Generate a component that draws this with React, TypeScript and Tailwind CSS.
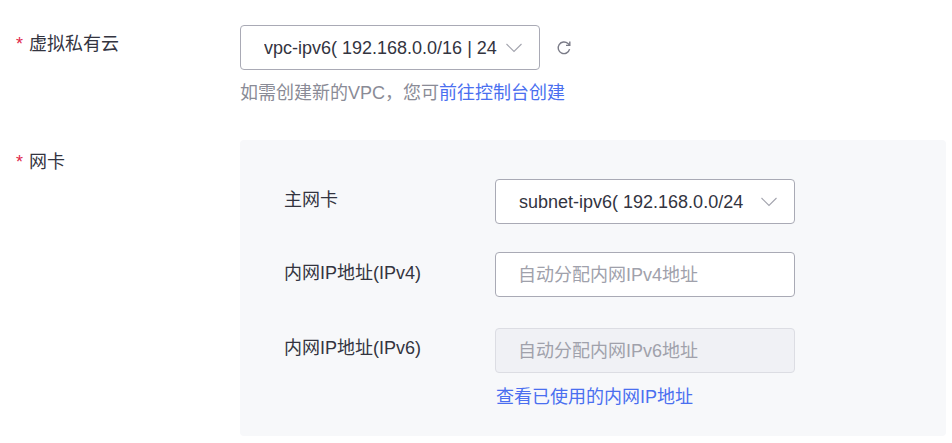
function Chevron() {
  return (
    <svg width="18" height="10" viewBox="0 0 18 10" fill="none" className="shrink-0 text-[#a3a4ae]">
      <path d="M1.5 1l7.5 7.5L16.5 1" stroke="currentColor" strokeWidth="1.1" />
    </svg>
  )
}

function Refresh() {
  return (
    <svg width="16" height="16" viewBox="0 0 16 16" fill="none" className="ml-[16px] text-[#7a7b87]">
      <path d="M13.6 9.2A5.8 5.8 0 1 1 12 3.6l1.6 1.6" stroke="currentColor" strokeWidth="1.4" />
      <path d="M13.8 1.6v3.8H10" stroke="currentColor" strokeWidth="1.4" />
    </svg>
  )
}

function Select({ text }: { text: string }) {
  return (
    <div className="flex h-[45px] w-[300px] items-center rounded-[4px] border border-[#a9aab5] bg-white pl-[23px] pr-[16px]">
      <span className="flex-1 overflow-hidden whitespace-nowrap text-[#33343f]">{text}</span>
      <Chevron />
    </div>
  )
}

function Label({ text, top }: { text: string; top: string }) {
  return (
    <div className={`flex w-[240px] shrink-0 pl-[16px] text-[#33343f] ${top}`}>
      <span className="w-[13px] text-[#e0284a]">*</span>
      <span>{text}</span>
    </div>
  )
}

export default function App() {
  return (
    <div className="h-[443px] w-[952px] overflow-hidden bg-white pt-[25px] font-['Liberation_Sans','Noto_Sans_CJK_SC',sans-serif] text-[18px] leading-[36px]">
      <div className="flex">
        <Label text="虚拟私有云" top="pt-px" />
        <div>
          <div className="flex items-center">
            <Select text="vpc-ipv6( 192.168.0.0/16 | 24" />
            <Refresh />
          </div>
          <p className="mt-[5px] text-[#8a8b96]">
            如需创建新的VPC，您可<span className="text-[#4a6ff0]">前往控制台创建</span>
          </p>
        </div>
      </div>

      <div className="mt-[29px] flex">
        <Label text="网卡" top="pt-[4px]" />
        <div className="h-[296px] w-[706px] rounded-[4px] bg-[#f7f8fa] pl-[44px] pt-[39px]">
          <div className="flex">
            <span className="w-[211px] pt-[3px] text-[#33343f]">主网卡</span>
            <Select text="subnet-ipv6( 192.168.0.0/24" />
          </div>
          <div className="mt-[28px] flex">
            <span className="w-[211px] pt-[3px] text-[#33343f]">内网IP地址(IPv4)</span>
            <div className="flex h-[45px] w-[300px] items-center rounded-[4px] border border-[#a9aab5] bg-white pl-[22px] text-[#a0a1ab]">
              自动分配内网IPv4地址
            </div>
          </div>
          <div className="mt-[31px] flex">
            <span className="w-[211px] pt-[2px] text-[#33343f]">内网IP地址(IPv6)</span>
            <div>
              <div className="flex h-[45px] w-[300px] items-center rounded-[4px] border border-[#dcdde3] bg-[#f0f1f5] pl-[22px] text-[#a0a1ab]">
                自动分配内网IPv6地址
              </div>
              <div className="mt-[6px] pl-px text-[#4a6ff0]">查看已使用的内网IP地址</div>
            </div>
          </div>
        </div>
      </div>
    </div>
  )
}
